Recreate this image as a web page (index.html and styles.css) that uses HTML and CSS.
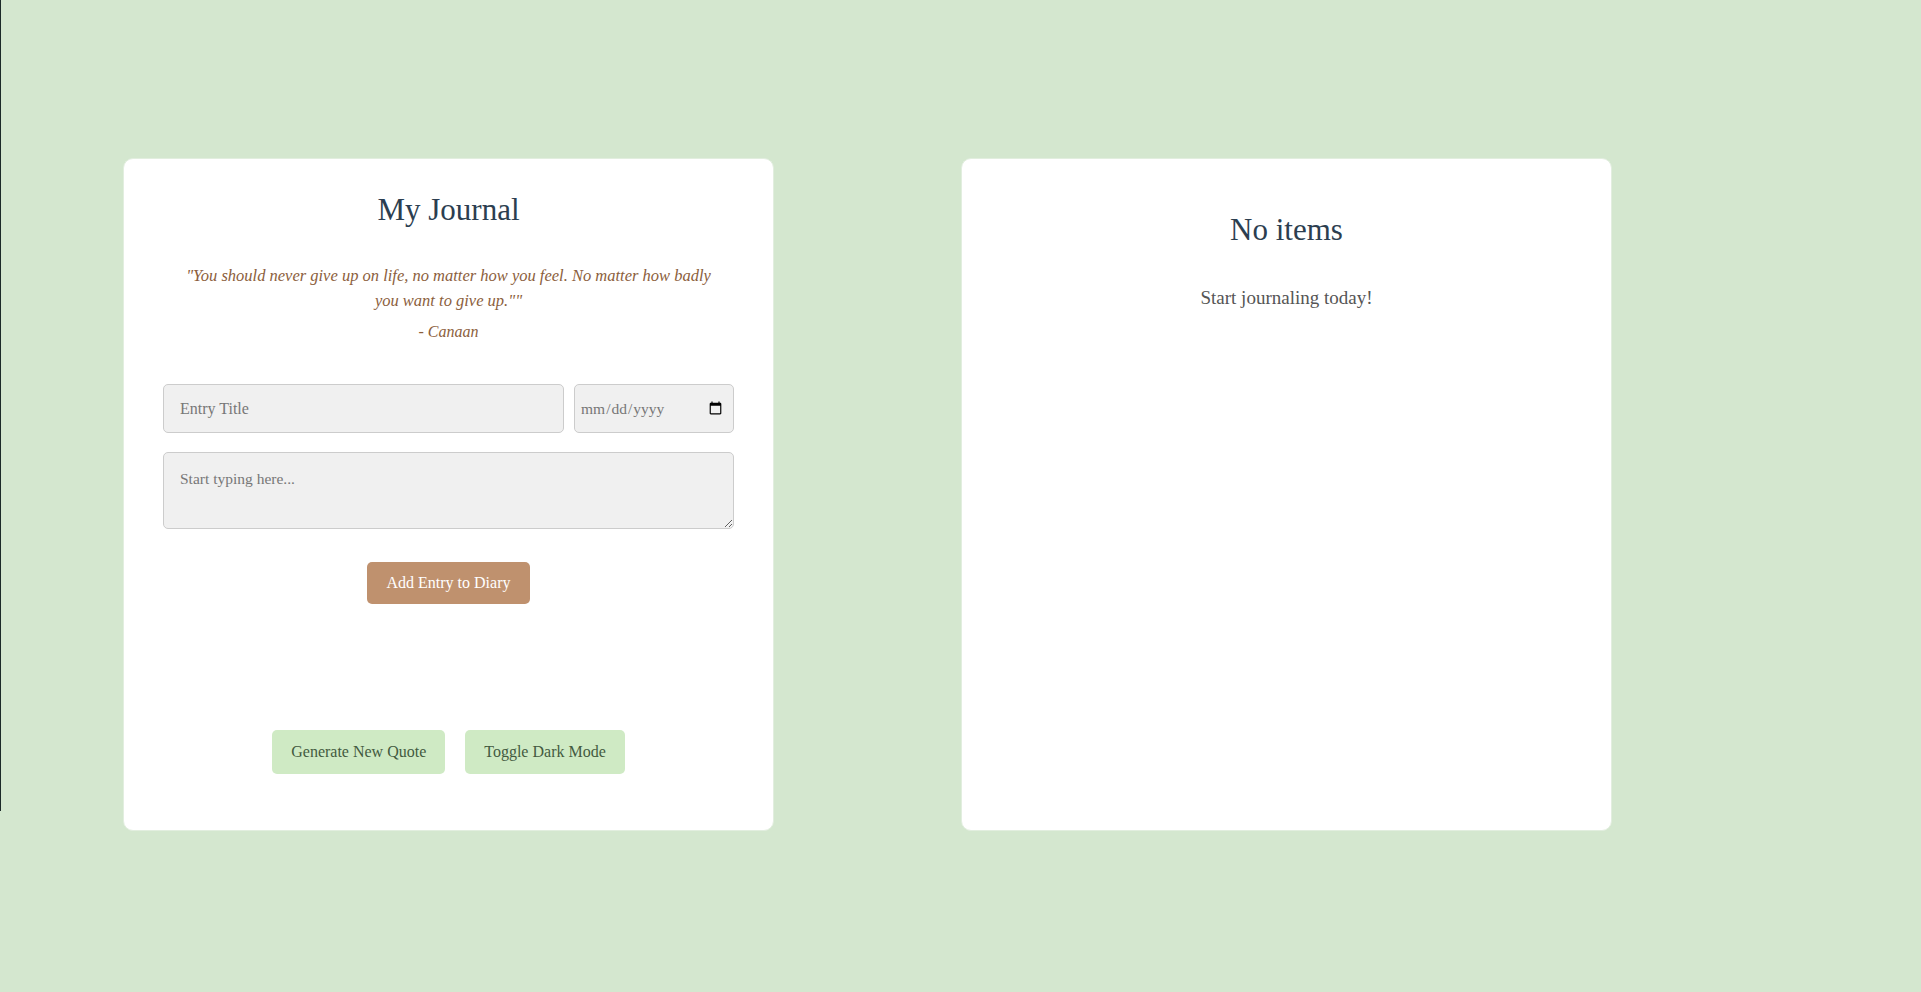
FILE: index.html
```html
<!DOCTYPE html>
<html lang="en">
<head>
<meta charset="utf-8">
<title>My Journal</title>
<link rel="stylesheet" href="styles.css">
</head>
<body>
<div class="page">
  <section class="card journal">
    <h1 class="title">My Journal</h1>
    <p class="quote">"You should never give up on life, no matter how you feel. No matter how badly you want to give up.""</p>
    <p class="author">- Canaan</p>
    <form class="entry-form">
      <div class="row">
        <input class="field title-field" type="text" placeholder="Entry Title">
        <input class="field date-field" type="date">
      </div>
      <textarea class="field body-field" placeholder="Start typing here..."></textarea>
      <div class="add-wrap">
        <button type="button" class="btn add-btn">Add Entry to Diary</button>
      </div>
    </form>
    <div class="actions">
      <button type="button" class="btn soft-btn">Generate New Quote</button>
      <button type="button" class="btn soft-btn">Toggle Dark Mode</button>
    </div>
  </section>
  <section class="card entries">
    <h2 class="title empty-title">No items</h2>
    <p class="empty-text">Start journaling today!</p>
  </section>
</div>
</body>
</html>
```

FILE: styles.css
```css
html {
  background: linear-gradient(#1c2a28, #1c2a28) 0 0 / 1px 811px no-repeat, #d4e7cf;
}
body {
  margin: 0;
  font-family: "Liberation Serif", "DejaVu Serif", serif;
}
.page {
  min-height: 992px;
  padding: 158px 0 0 123px;
  box-sizing: border-box;
  display: flex;
  align-items: flex-start;
  gap: 187px;
}
.card {
  width: 651px;
  height: 673px;
  box-sizing: border-box;
  background: #ffffff;
  border: 1px solid #e2eedf;
  border-radius: 10px;
  display: flex;
  flex-direction: column;
  flex-shrink: 0;
}
.journal {
  padding: 33px 39px 56px;
}
.title {
  margin: 0;
  font-weight: normal;
  font-size: 31px;
  line-height: 36px;
  color: #2c3e50;
  text-align: center;
}
.quote {
  margin: 35px 17px 0;
  font-size: 16.5px;
  line-height: 25px;
  font-style: italic;
  color: #8b5e3c;
  text-align: center;
}
.author {
  margin: 8px 0 0;
  font-size: 16px;
  line-height: 22px;
  font-style: italic;
  color: #8b5e3c;
  text-align: center;
}
.entry-form {
  margin-top: 41px;
  display: flex;
  flex-direction: column;
}
.row {
  display: flex;
  gap: 10px;
}
.field {
  box-sizing: border-box;
  background: #f0f0f0;
  border: 1px solid #cccccc;
  border-radius: 5px;
  font-family: "Liberation Serif", "DejaVu Serif", serif;
  font-size: 15.5px;
  color: #333333;
  outline: none;
}
.field::placeholder {
  color: #777777;
}
.title-field {
  flex: 1;
  height: 49px;
  padding: 0 16px;
  font-size: 16px;
}
.date-field {
  width: 160px;
  height: 49px;
  padding: 0 8px 0 5px;
  color: #777777;
}
.body-field {
  margin-top: 19px;
  height: 77px;
  padding: 17px 16px 13px;
  resize: vertical;
}
.add-wrap {
  margin-top: 33px;
  display: flex;
  justify-content: center;
}
.btn {
  font-family: "Liberation Serif", "DejaVu Serif", serif;
  font-size: 16px;
  line-height: 18px;
  border: none;
  border-radius: 5px;
  cursor: pointer;
}
.add-btn {
  background: #bf916e;
  color: #ffffff;
  padding: 12px 20px;
}
.actions {
  margin-top: auto;
  display: flex;
  justify-content: center;
  gap: 20px;
}
.soft-btn {
  background: #cfeac4;
  color: #435a3f;
  padding: 13px 19px;
}
.entries {
  padding: 53px 40px 40px;
  align-items: center;
}
.empty-text {
  margin: 38px 0 0;
  font-size: 19px;
  line-height: 24px;
  color: #555555;
}
```
